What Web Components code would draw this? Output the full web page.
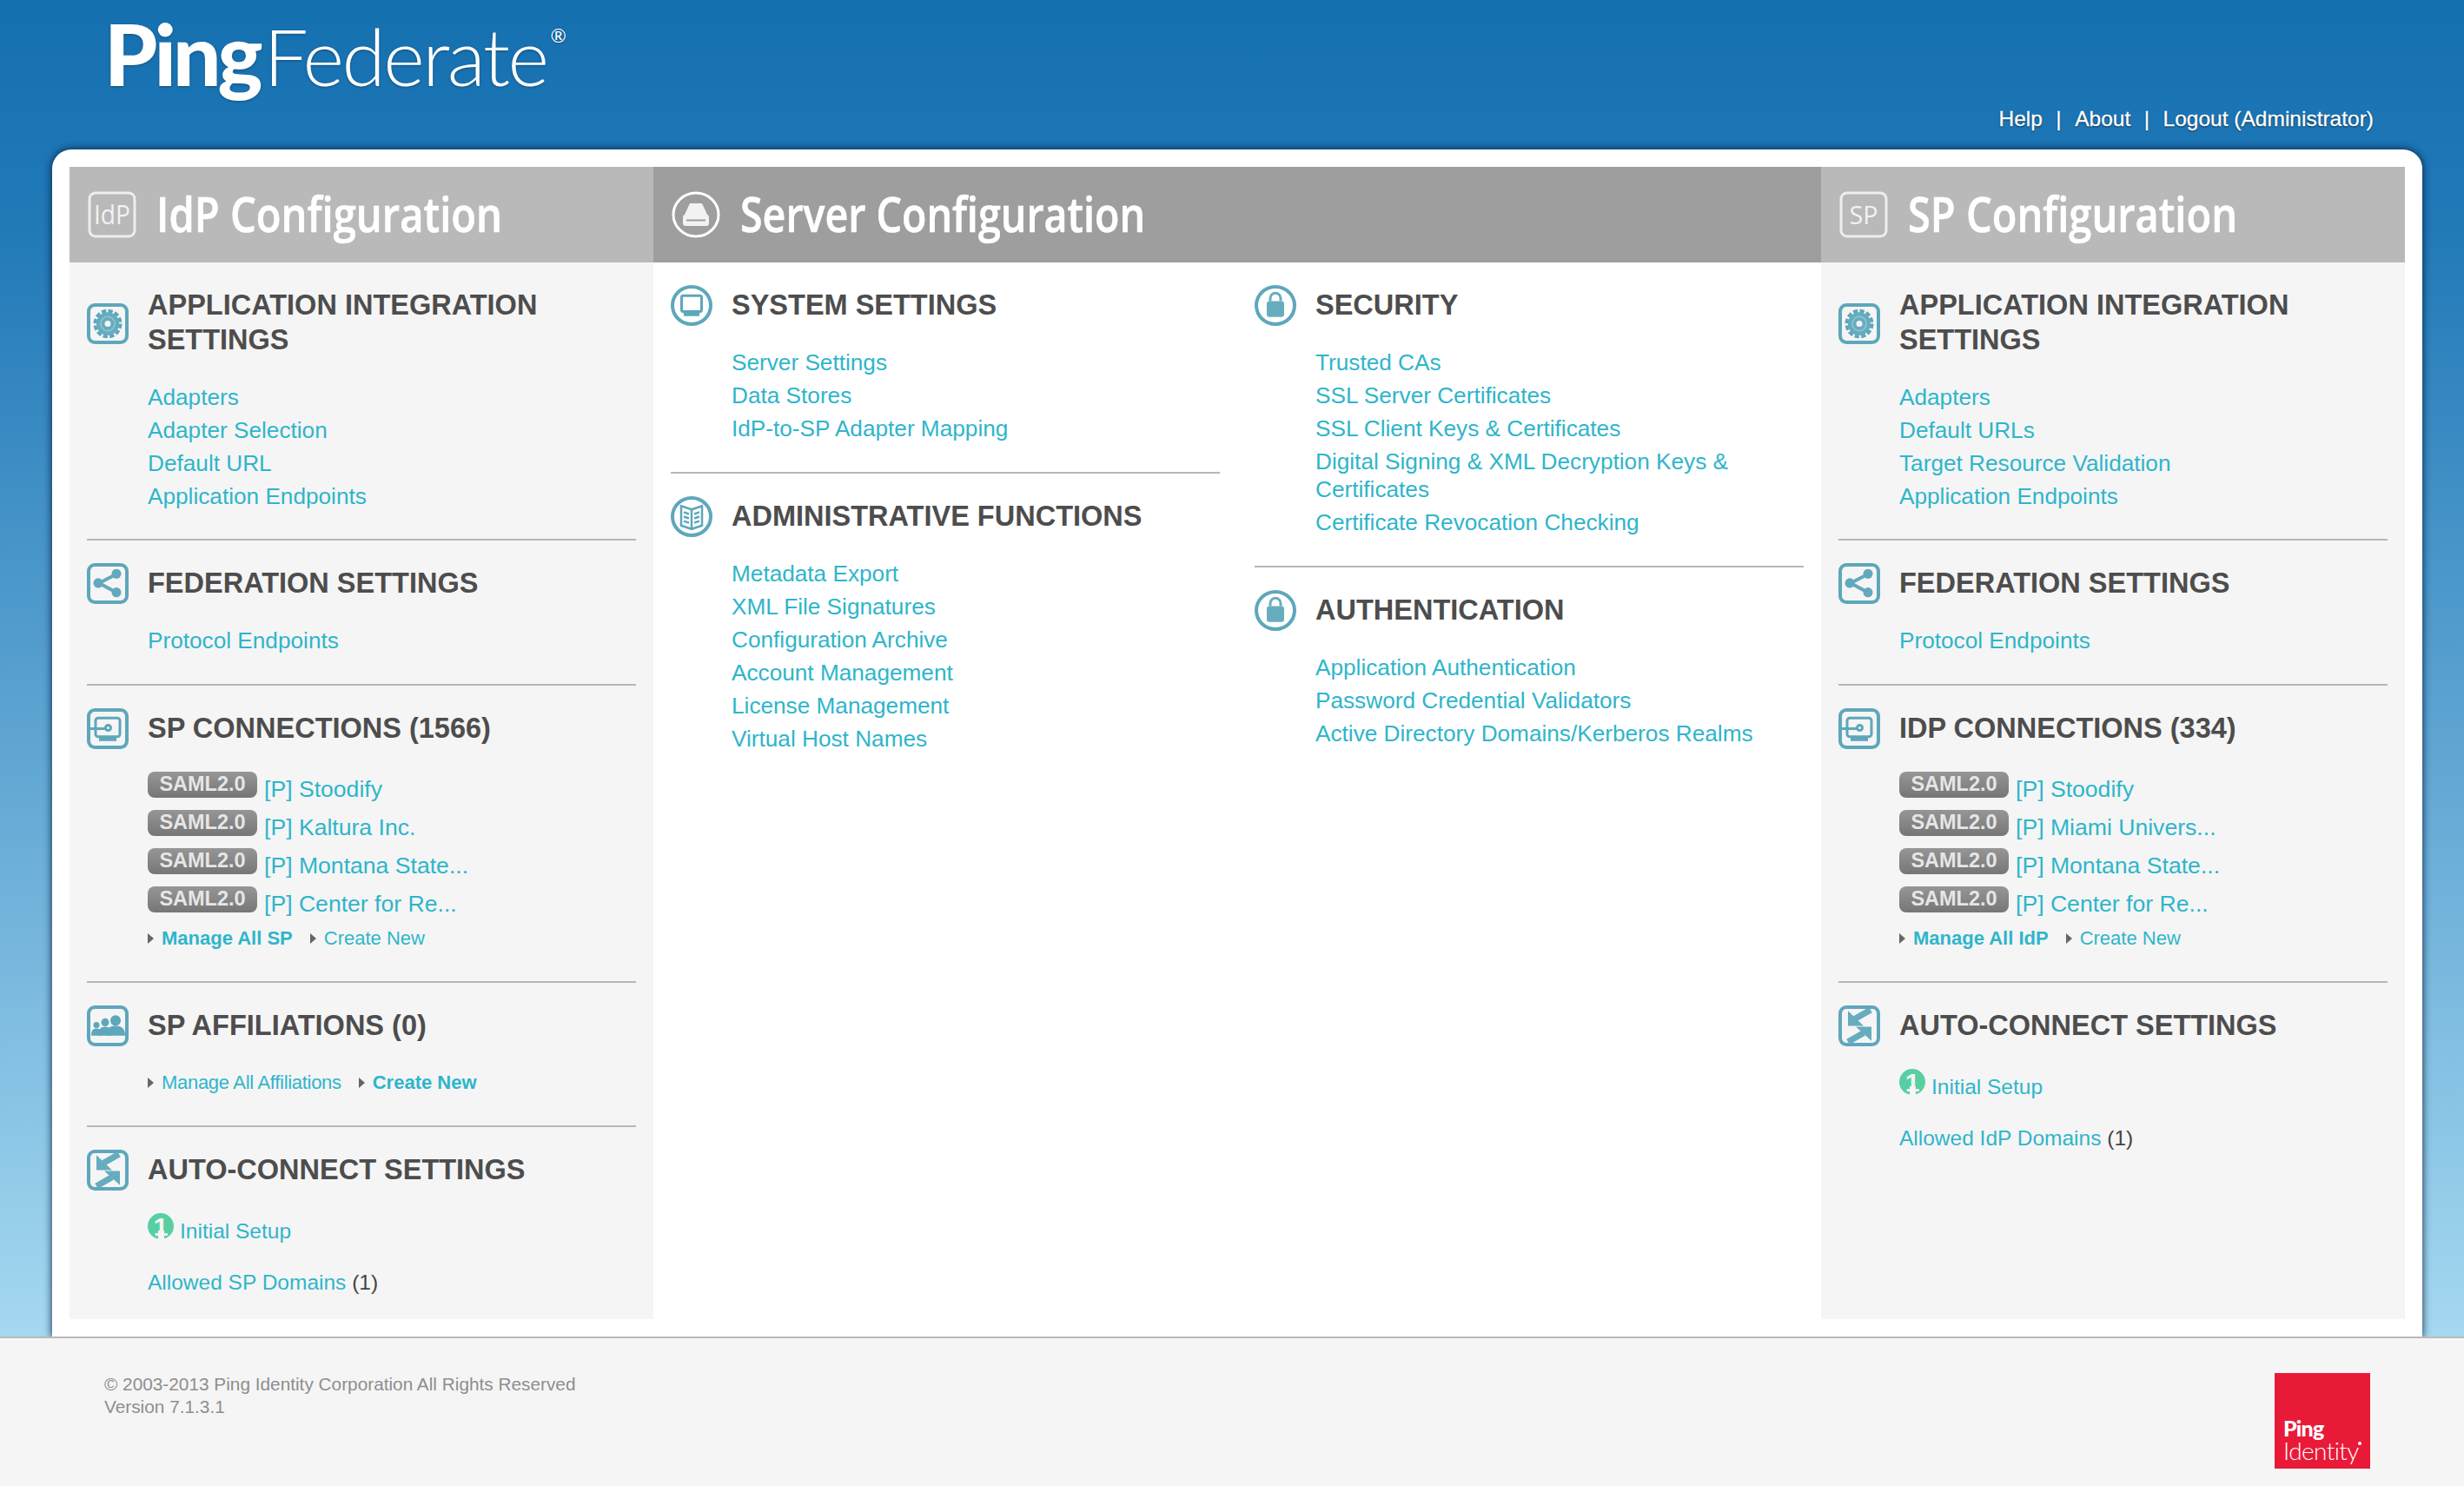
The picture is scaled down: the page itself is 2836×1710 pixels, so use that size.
<!DOCTYPE html>
<html>
<head>
<meta charset="utf-8">
<title>PingFederate</title>
<style>
	html, body { margin: 0; padding: 0; }
	body {
		width: 2836px;
		height: 1710px;
		overflow: hidden;
		display: flex;
		flex-direction: column;
		font-family: "Liberation Sans", Arial, sans-serif;
		background: linear-gradient(#1570b0 0, #2179b8 260px, #a5d8f1 1540px) no-repeat;
	}
</style>
</head>
<body>
<pf-header></pf-header>
<pf-panel>
	<pf-column heading="IdP Configuration" icon="idp" tone="grey" title-width="398">
		<pf-section heading="APPLICATION INTEGRATION SETTINGS" icon="gear" style="--top:29px;--gap:25px;--end:30px">
			<pf-link>Adapters</pf-link><pf-link>Adapter Selection</pf-link><pf-link>Default URL</pf-link><pf-link>Application Endpoints</pf-link>
		</pf-section>
		<pf-section heading="FEDERATION SETTINGS" icon="share"><pf-link>Protocol Endpoints</pf-link></pf-section>
		<pf-section heading="SP CONNECTIONS (1566)" icon="conn" style="--end:30px">
			<pf-conn>[P] Stoodify</pf-conn><pf-conn>[P] Kaltura Inc.</pf-conn><pf-conn>[P] Montana State...</pf-conn><pf-conn>[P] Center for Re...</pf-conn>
			<pf-actions first="Manage All SP" second="Create New" bold="first"></pf-actions>
		</pf-section>
		<pf-section heading="SP AFFILIATIONS (0)" icon="people" style="--end:30px">
			<pf-actions first="Manage All Affiliations" second="Create New" bold="second" tight></pf-actions>
		</pf-section>
		<pf-section heading="AUTO-CONNECT SETTINGS" icon="arrows">
			<pf-setup></pf-setup>
			<pf-link small style="margin-top:21px">Allowed SP Domains <pf-count>(1)</pf-count></pf-link>
		</pf-section>
	</pf-column>
	<pf-column heading="Server Configuration" icon="drive" tone="dark" cols="2" title-width="466">
		<div>
			<pf-section heading="SYSTEM SETTINGS" icon="monitor">
				<pf-link>Server Settings</pf-link><pf-link>Data Stores</pf-link><pf-link>IdP-to-SP Adapter Mapping</pf-link>
			</pf-section>
			<pf-section heading="ADMINISTRATIVE FUNCTIONS" icon="book">
				<pf-link>Metadata Export</pf-link><pf-link>XML File Signatures</pf-link><pf-link>Configuration Archive</pf-link><pf-link>Account Management</pf-link><pf-link>License Management</pf-link><pf-link>Virtual Host Names</pf-link>
			</pf-section>
		</div>
		<div>
			<pf-section heading="SECURITY" icon="lock">
				<pf-link>Trusted CAs</pf-link><pf-link>SSL Server Certificates</pf-link><pf-link>SSL Client Keys &amp; Certificates</pf-link><pf-link style="line-height:32px;padding:3px 0">Digital Signing &amp; XML Decryption Keys &amp; Certificates</pf-link><pf-link>Certificate Revocation Checking</pf-link>
			</pf-section>
			<pf-section heading="AUTHENTICATION" icon="lock">
				<pf-link>Application Authentication</pf-link><pf-link>Password Credential Validators</pf-link><pf-link>Active Directory Domains/Kerberos Realms</pf-link>
			</pf-section>
		</div>
	</pf-column>
	<pf-column heading="SP Configuration" icon="sp" tone="grey" title-width="379">
		<pf-section heading="APPLICATION INTEGRATION SETTINGS" icon="gear" style="--top:29px;--gap:25px;--end:30px">
			<pf-link>Adapters</pf-link><pf-link>Default URLs</pf-link><pf-link>Target Resource Validation</pf-link><pf-link>Application Endpoints</pf-link>
		</pf-section>
		<pf-section heading="FEDERATION SETTINGS" icon="share"><pf-link>Protocol Endpoints</pf-link></pf-section>
		<pf-section heading="IDP CONNECTIONS (334)" icon="conn" style="--end:30px">
			<pf-conn>[P] Stoodify</pf-conn><pf-conn>[P] Miami Univers...</pf-conn><pf-conn>[P] Montana State...</pf-conn><pf-conn>[P] Center for Re...</pf-conn>
			<pf-actions first="Manage All IdP" second="Create New" bold="first"></pf-actions>
		</pf-section>
		<pf-section heading="AUTO-CONNECT SETTINGS" icon="arrows">
			<pf-setup></pf-setup>
			<pf-link small style="margin-top:21px">Allowed IdP Domains <pf-count>(1)</pf-count></pf-link>
		</pf-section>
	</pf-column>
</pf-panel>
<pf-footer></pf-footer>

<script>
const frame = '<rect x="2" y="2" width="44" height="42" rx="7" fill="none" stroke="#5ea7bb" stroke-width="4"/>'
const ring = '<ellipse cx="24" cy="23" rx="22" ry="21" fill="none" stroke="#5ea7bb" stroke-width="4"/>'

const icons = {
	gear: frame + `<circle cx="24" cy="23" r="14.500" fill="none" stroke="#5ea7bb" stroke-width="4" stroke-dasharray="5.200 2.400"/>
		<circle cx="24" cy="23" r="13" fill="#66acbf"/>
		<circle cx="24" cy="23" r="8" fill="none" stroke="#93c6d3" stroke-width="1.500"/>
		<circle cx="24" cy="23" r="3.500" fill="#f5f5f5"/>`,
	share: frame + `<g stroke="none" fill="#63a9bd"><path d="M33 13 14 22.500l19 10" fill="none" stroke="#63a9bd" stroke-width="4"/>
		<circle cx="34" cy="12" r="5.500"/><circle cx="13" cy="22.500" r="5.500"/><circle cx="34" cy="33" r="5.500"/></g>`,
	conn: frame + `<g fill="none" stroke="#5ea7bb" stroke-width="3"><rect x="10" y="11" width="28" height="21" rx="3"/>
		<path d="M2 23h19"/><circle cx="24.500" cy="22" r="3"/><path d="M14 35h20" stroke-width="4"/></g>`,
	people: frame + `<g fill="#5ea7bb"><circle cx="33" cy="17" r="6"/><path d="M22 34c0-9 5-11 11-11s11 2 11 11z"/>
		<circle cx="21" cy="19" r="4.500"/><path d="M13 34c0-7 3-10 8-10s8 3 8 10z"/>
		<circle cx="11" cy="22" r="3.500"/><path d="M5 34c0-6 2-8 6-8s6 2 6 8z"/></g><path d="M5 35h38" stroke="#f5f5f5" stroke-width="1.500"/>`,
	arrows: frame + `<g fill="#66acbf"><path d="M11 6 29 23H11z"/><path d="M38 40 20 24h18z"/></g>
		<path d="M19 15 37 5M29 31 11 41" stroke="#66acbf" stroke-width="7"/>`,
	monitor: ring + `<g fill="none" stroke="#5ea7bb"><rect x="12.500" y="12" width="23" height="18" rx="2" stroke-width="3"/><path d="M15 33h18" stroke-width="4"/></g>`,
	book: ring + `<g fill="none" stroke="#5ea7bb" stroke-width="2.500"><path d="M24 15 12 11v22l12 4 12-4V11z"/><path d="M24 15v22M15 18l6 2M15 23l6 2M15 28l6 2M33 18l-6 2M33 23l-6 2M33 28l-6 2"/></g>`,
	lock: ring + `<g fill="#67adc0"><rect x="14" y="18" width="20" height="18" rx="3"/></g><path d="M18 18v-3a6 6 0 0 1 12 0v3" fill="none" stroke="#67adc0" stroke-width="3"/>`
}

const panelIcons = {
	idp: `<svg width="56" height="54" viewBox="0 0 56 54"><rect x="2" y="2" width="52" height="50" rx="7" fill="none" stroke="#eee" stroke-width="3"/>
		<text x="28" y="38" text-anchor="middle" font-family="Open Sans, sans-serif" font-size="31" fill="#f2f2f2" textLength="42" lengthAdjust="spacingAndGlyphs">IdP</text></svg>`,
	sp: `<svg width="56" height="54" viewBox="0 0 56 54"><rect x="2" y="2" width="52" height="50" rx="7" fill="none" stroke="#eee" stroke-width="3"/>
		<text x="28" y="38" text-anchor="middle" font-family="Open Sans, sans-serif" font-size="30" fill="#f2f2f2" textLength="33" lengthAdjust="spacingAndGlyphs">SP</text></svg>`,
	drive: `<svg width="56" height="54" viewBox="0 0 56 54"><ellipse cx="28" cy="27" rx="26" ry="25" fill="none" stroke="#fff" stroke-width="3"/>
		<path d="M21 14h14l6 13H15z" fill="#f2f2f2"/><rect x="13" y="27" width="30" height="13" rx="3" fill="#f2f2f2"/><path d="M17 33.500h22" stroke="#9e9e9e" stroke-width="2"/></svg>`
}

class PfIcon extends HTMLElement {
	connectedCallback() {
		this.attachShadow({ mode: 'open' }).innerHTML = `
			<style>:host { display: block; width: 48px; height: 47px; } svg { display: block; }</style>
			<svg width="48" height="47" viewBox="0 0 48 46" preserveAspectRatio="none">${icons[this.getAttribute('name')]}</svg>`
	}
}

class PfHeader extends HTMLElement {
	constructor() {
		super()
		this.attachShadow({ mode: 'open' }).innerHTML = `
			<style>
				:host { display: flex; justify-content: space-between; align-items: flex-end; height: 172px; flex: none; padding: 0 104px 17px 120px; box-sizing: border-box; color: #fff; }
				.logo { align-self: flex-start; margin-top: 3px; font-family: Lato, "Open Sans", sans-serif; font-size: 98px; line-height: 116px; white-space: nowrap; text-shadow: 0 1px 3px rgba(0,0,0,.3); }
				.ping { font-weight: 900; letter-spacing: -4px; }
				.fed { font-size: 91px; font-weight: 300; letter-spacing: -2.500px; margin-left: 5px; }
				sup { font-size: 22px; font-weight: 400; line-height: 0; vertical-align: 50px; margin-left: 4px; letter-spacing: 0; }
				nav { display: flex; gap: 15.500px; font-size: 24.500px; line-height: 36px; -webkit-text-stroke: .3px #fff; text-shadow: 0 1px 2px rgba(0,0,0,.7); }
			</style>
			<div class="logo"><span class="ping">Ping</span><span class="fed">Federate</span><sup>®</sup></div>
			<nav><span>Help</span><span>|</span><span>About</span><span>|</span><span>Logout (Administrator)</span></nav>`
	}
}

class PfPanel extends HTMLElement {
	constructor() {
		super()
		this.attachShadow({ mode: 'open' }).innerHTML = `
			<style>
				:host { display: grid; grid-template-columns: 672px 1344px 672px; flex: 1; min-height: 0; margin: 0 48px 0 60px; padding: 20px; background: #fff; border-radius: 22px 22px 0 0; box-shadow: 0 0 9px 1px rgba(0,20,50,.75); }
			</style>
			<slot></slot>`
	}
}

class PfColumn extends HTMLElement {
	connectedCallback() {
		const dark = this.getAttribute('tone') === 'dark'
		this.attachShadow({ mode: 'open' }).innerHTML = `
			<style>
				:host { display: flex; flex-direction: column; background: ${dark ? '#fff' : '#f5f5f5'}; }
				header { display: flex; align-items: center; gap: 23px; height: 110px; padding-left: 21px; background: ${dark ? '#9e9e9e' : '#b9b9b9'}; color: #fff; }
				svg { display: block; flex: none; }
				h1 { margin: 0; font: 600 56px/106px "Open Sans", sans-serif; -webkit-text-stroke: .7px #fff; white-space: nowrap; transform-origin: left center; padding-bottom: 4px; }
				.body { display: grid; grid-template-columns: repeat(${this.getAttribute('cols') || 1}, 1fr); column-gap: 40px; padding: 0 20px; }
			</style>
			<header>${panelIcons[this.getAttribute('icon')]}<h1>${this.getAttribute('heading')}</h1></header>
			<div class="body"><slot></slot></div>`
		const h1 = this.shadowRoot.querySelector('h1')
		const range = document.createRange()
		range.selectNodeContents(h1)
		h1.style.transform = `scaleX(${this.getAttribute('title-width') / range.getBoundingClientRect().width})`
	}
}

class PfSection extends HTMLElement {
	connectedCallback() {
		this.attachShadow({ mode: 'open' }).innerHTML = `
			<style>
				:host { display: block; padding: var(--top, 26px) 0 var(--end, 31px); border-bottom: 2px solid #b7b7b7; }
				:host(:last-child) { border-bottom: 0; padding-bottom: 0; }
				.head { display: flex; align-items: center; gap: 22px; min-height: 47px; }
				pf-icon { flex: none; }
				h2 { margin: 0; padding-bottom: 2px; font: 700 32.500px/40px "Liberation Sans", Arial, sans-serif; color: #4d4d4d; max-width: 500px; }
				.list { padding: var(--gap, 23px) 0 0 70px; }
			</style>
			<div class="head"><pf-icon name="${this.getAttribute('icon')}"></pf-icon><h2>${this.getAttribute('heading')}</h2></div>
			<div class="list"><slot></slot></div>`
	}
}

class PfLink extends HTMLElement {
	constructor() {
		super()
		this.attachShadow({ mode: 'open' }).innerHTML = `
			<style>
				:host { display: block; font-size: 26.200px; line-height: 38px; color: #2fb5cb; }
				:host([small]) { font-size: 24.500px; }
			</style>
			<slot></slot>`
	}
}

class PfCount extends HTMLElement {
	constructor() {
		super()
		this.attachShadow({ mode: 'open' }).innerHTML = `
			<style>:host { display: inline; color: #444; }</style><slot></slot>`
	}
}

class PfConn extends HTMLElement {
	constructor() {
		super()
		this.attachShadow({ mode: 'open' }).innerHTML = `
			<style>
				:host { display: flex; align-items: flex-start; gap: 8px; height: 44px; font-size: 26.600px; line-height: 38px; color: #2fb5cb; }
				.badge { flex: none; box-sizing: border-box; width: 126px; height: 30px; margin-top: 3px; border-radius: 8px; background: linear-gradient(#969696, #767676); color: #e6e6e6; font: 700 23.500px/29px "Liberation Sans", Arial, sans-serif; text-align: center; }
				.name { margin-top: 4px; white-space: nowrap; }
			</style>
			<span class="badge">SAML2.0</span><span class="name"><slot></slot></span>`
	}
}

class PfActions extends HTMLElement {
	connectedCallback() {
		const bold = this.getAttribute('bold')
		this.attachShadow({ mode: 'open' }).innerHTML = `
			<style>
				:host { display: flex; gap: 20px; font-size: 22px; line-height: 38px; color: #2fb5cb; }
				:host([tight]) .first { letter-spacing: -.300px; }
				span { display: flex; align-items: center; gap: 9px; white-space: nowrap; }
				i { width: 0; height: 0; border-left: 7px solid #666; border-top: 6px solid transparent; border-bottom: 6px solid transparent; }
				.on { font-weight: 700; }
			</style>
			<span class="first ${bold === 'first' ? 'on' : ''}"><i></i>${this.getAttribute('first')}</span>
			<span class="${bold === 'second' ? 'on' : ''}"><i></i>${this.getAttribute('second')}</span>`
	}
}

class PfSetup extends HTMLElement {
	constructor() {
		super()
		this.attachShadow({ mode: 'open' }).innerHTML = `
			<style>
				:host { display: flex; align-items: flex-start; gap: 7px; height: 43px; font-size: 24.500px; line-height: 38px; color: #2fb5cb; }
				.num { flex: none; position: relative; width: 30px; height: 30px; margin-top: 3px; border-radius: 50%; background: #58cfa2; color: #f5f5f5; font: 700 30px/31px "Liberation Sans", Arial, sans-serif; text-align: center; }
				.num::after { content: ""; position: absolute; left: 12px; top: 20px; width: 7px; height: 10px; background: #f5f5f5; }
				.label { margin-top: 5px; }
			</style>
			<span class="num">1</span><span class="label">Initial Setup</span>`
	}
}

class PfFooter extends HTMLElement {
	constructor() {
		super()
		this.attachShadow({ mode: 'open' }).innerHTML = `
			<style>
				:host { display: flex; justify-content: space-between; align-items: flex-start; flex: none; height: 172px; box-sizing: border-box; border-top: 2px solid #b9b9b9; background: #f5f5f5; padding: 40px 108px 0 120px; color: #8e8e8e; font-size: 20.800px; line-height: 26px; }
				.logo { position: relative; width: 110px; height: 110px; box-sizing: border-box; padding: 50px 0 0 10px; background: #e91a38; color: #fff; font-family: Lato, "Open Sans", sans-serif; }
				.logo::after { content: ""; position: absolute; left: 96px; top: 79px; width: 4px; height: 4px; border-radius: 50%; background: #fff; }
				.logo b { display: block; font-size: 25px; font-weight: 900; line-height: 27px; letter-spacing: -.800px; }
				.logo span { display: block; font-size: 28px; font-weight: 300; line-height: 25px; letter-spacing: -.600px; white-space: nowrap; }
			</style>
			<div>© 2003-2013 Ping Identity Corporation All Rights Reserved<br>Version 7.1.3.1</div>
			<div class="logo"><b>Ping</b><span>Identity</span></div>`
	}
}

customElements.define('pf-icon', PfIcon)
customElements.define('pf-header', PfHeader)
customElements.define('pf-panel', PfPanel)
customElements.define('pf-section', PfSection)
customElements.define('pf-link', PfLink)
customElements.define('pf-count', PfCount)
customElements.define('pf-conn', PfConn)
customElements.define('pf-actions', PfActions)
customElements.define('pf-setup', PfSetup)
customElements.define('pf-footer', PfFooter)
customElements.define('pf-column', PfColumn)
</script>
</body>
</html>
